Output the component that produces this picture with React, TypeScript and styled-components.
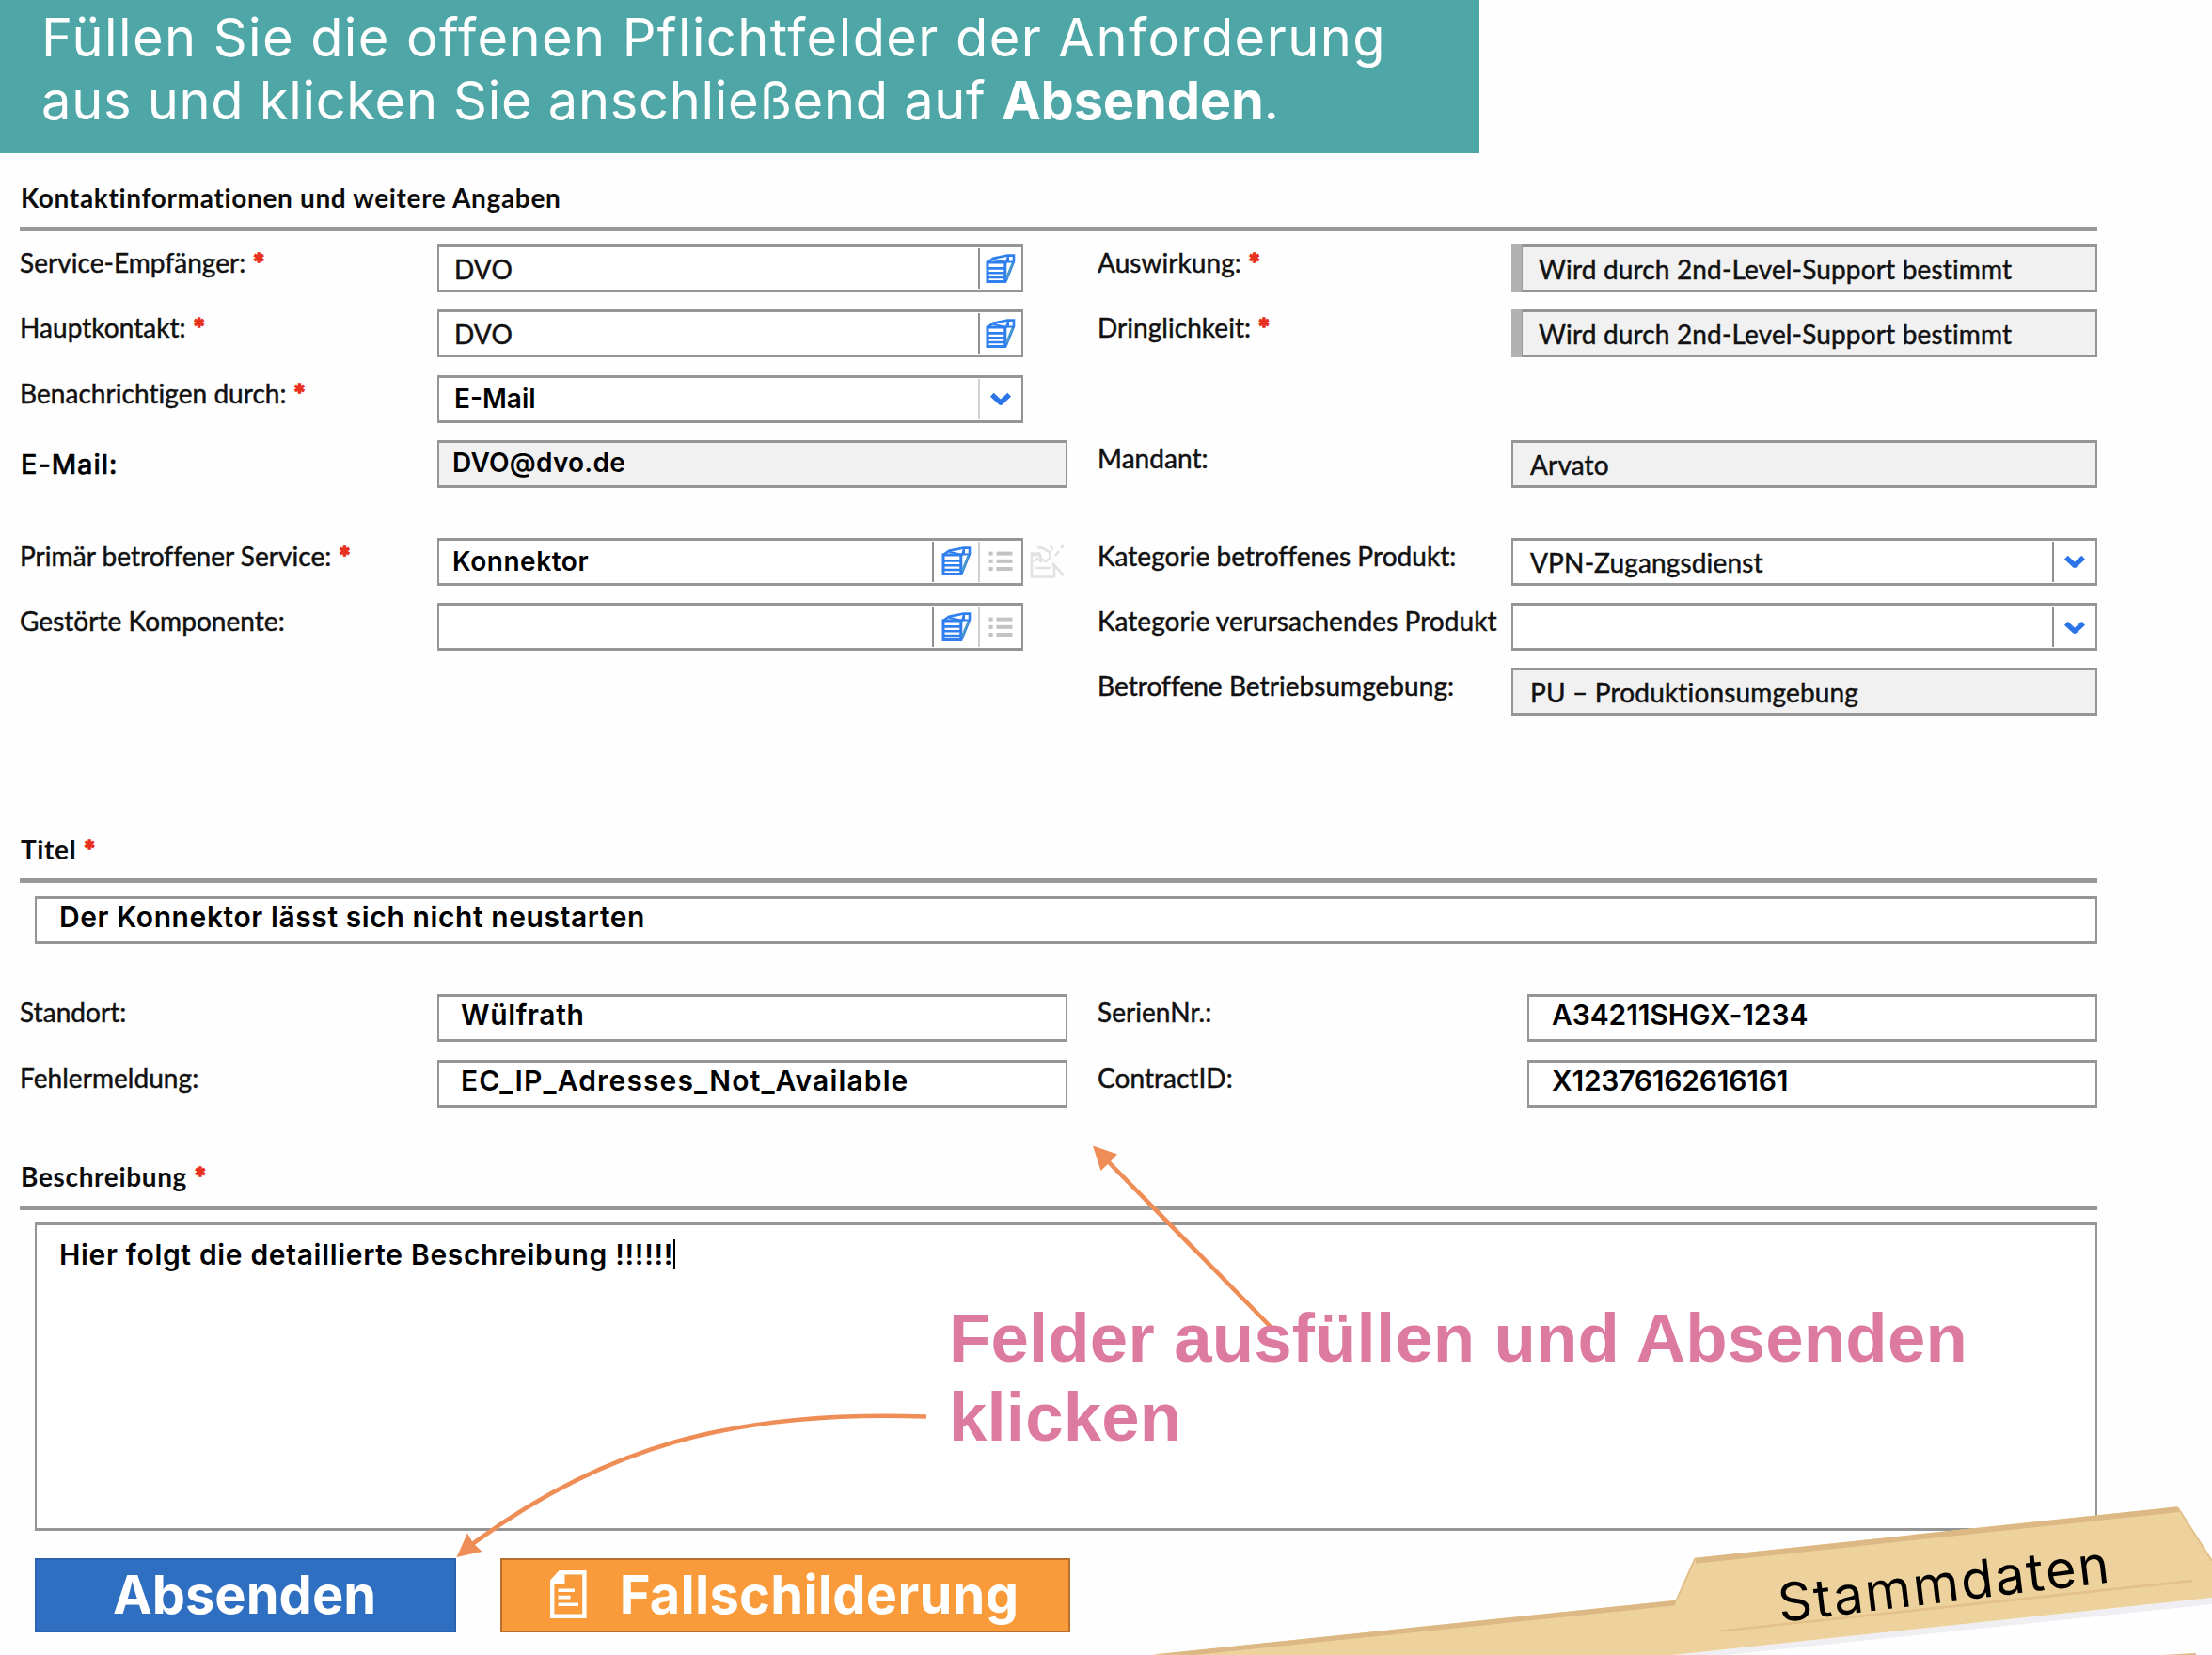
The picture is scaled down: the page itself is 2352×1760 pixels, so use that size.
import React from "react";
import styled, { createGlobalStyle } from "styled-components";

const LABEL_FONT = `Lato, "Open Sans", sans-serif`;
const ENTRY_FONT = `Inter, "Open Sans", sans-serif`;

const GlobalStyle = createGlobalStyle`
  * { box-sizing: border-box; }
  body { margin: 0; background: #fefefe; }
`;

const Page = styled.main`
  position: relative;
  width: 2352px;
  height: 1760px;
  overflow: hidden;
  background: #fefefe;
  color: #111;
  font-family: ${LABEL_FONT};
`;

const Banner = styled.header`
  width: 1573px;
  height: 163px;
  padding: 7px 0 0 44px;
  background: #4ea7a6;
  color: #fff;
  font: 400 56px/67px ${ENTRY_FONT};
  white-space: nowrap;
`;

const BannerLine = styled.div<{ $track: number }>`
  letter-spacing: ${(p) => p.$track}px;
  b { letter-spacing: -0.2px; font-weight: 700; }
`;

const Form = styled.form`
  display: flex;
  flex-direction: column;
  width: 2209px;
  margin-left: 21px;
`;

const SectionHeading = styled.h2<{ $height: number }>`
  display: flex;
  align-items: flex-end;
  height: ${(p) => p.$height}px;
  margin: 0;
  padding: 0 0 14px 1px;
  border-bottom: 5px solid #999;
  font: 700 28px/34px ${LABEL_FONT};
  letter-spacing: 0.66px;
  color: #0c0c0c;
`;

const Required = styled.span`
  margin-left: 8px;
  color: #e8301f;
  font-weight: 900;
  letter-spacing: 0;
  -webkit-text-stroke: 1.6px currentColor;
`;

const FieldRows = styled.div<{ $top: number }>`
  display: flex;
  flex-direction: column;
  gap: 18.3px;
  margin-top: ${(p) => p.$top}px;
`;

const FieldRow = styled.div<{ $spaced?: boolean; $lower?: boolean }>`
  display: grid;
  grid-template-columns: ${(p) =>
    p.$lower ? "444px 670px 32px 457px 606px" : "444px 670px 32px 440px 623px"};
  height: 51px;
  margin-top: ${(p) => (p.$spaced ? 34.6 : 0)}px;
`;

const FieldLabel = styled.label<{ $right?: boolean }>`
  grid-column: ${(p) => (p.$right ? 4 : 1)};
  height: 46px;
  width: 425px;
  overflow: hidden;
  white-space: nowrap;
  font-size: 28px;
  line-height: 38px;
  letter-spacing: 0.05px;
  -webkit-text-stroke: 0.5px currentColor;
`;

const EntryLabel = styled(FieldLabel)`
  padding-left: 1px;
  font: 500 29px/51px ${ENTRY_FONT};
  letter-spacing: 0.9px;
  color: #000;
`;

const Control = styled.div<{ $right?: boolean }>`
  grid-column: ${(p) => (p.$right ? 5 : 2)};
  display: flex;
  align-items: center;
`;

const Box = styled.div<{ $width?: number; $readonly?: boolean; $marked?: boolean }>`
  display: flex;
  width: ${(p) => (p.$width ? `${p.$width}px` : "100%")};
  height: 51px;
  border: 2.5px solid #959595;
  border-width: 3px 2px;
  background: ${(p) => (p.$readonly ? "#f1f1f1" : "#fff")};
  &::before {
    content: "";
    display: ${(p) => (p.$marked ? "block" : "none")};
    width: 11px;
    margin: -3px 0 -3px -2px;
    flex: none;
    background: #b1b1b1;
    border-right: 1px solid #9a9a9a;
  }
`;

const Value = styled.span<{ $pad?: number }>`
  flex: 1;
  padding-left: ${(p) => p.$pad ?? 18}px;
  white-space: nowrap;
  font-size: 28px;
  line-height: 47px;
  letter-spacing: 0.16px;
  -webkit-text-stroke: 0.5px currentColor;
`;

const Entry = styled.span<{ $pad: number; $size?: number; $track?: number; $lift?: number }>`
  flex: 1;
  padding-left: ${(p) => p.$pad}px;
  white-space: nowrap;
  font: 600 ${(p) => p.$size ?? 30}px/${(p) => 45 - 2 * (p.$lift ?? 3)}px ${ENTRY_FONT};
  letter-spacing: ${(p) => p.$track ?? 0}px;
  color: #000;
`;

const Segment = styled.span<{ $tone?: string; $width?: number }>`
  display: flex;
  align-items: center;
  justify-content: center;
  width: ${(p) => p.$width ?? 46}px;
  margin: 1px 0;
  border-left: 2px solid ${(p) => p.$tone ?? "#8f8f8f"};
  svg { display: block; }
`;

const SideIcon = styled.span`
  display: flex;
  margin-left: 7px;
`;

const TitleBox = styled(Box)`
  width: auto;
  margin: 14px 0 0 16px;
`;

const DescriptionBox = styled.div`
  display: flex;
  align-items: flex-start;
  height: 328px;
  margin: 13px 0 0 16px;
  padding: 13px 0 0 24px;
  border: 3px solid #959595;
  border-width: 3px 2px;
  background: #fff;
  font: 600 30px/36px ${ENTRY_FONT};
  letter-spacing: 0.68px;
  color: #000;
`;

const Caret = styled.i`
  width: 2px;
  height: 32px;
  margin-top: 2px;
  background: #000;
`;

const Actions = styled.div`
  display: flex;
  gap: 47px;
  margin: 29px 0 0 16px;
`;

const ActionButton = styled.button<{ $width: number; $fill: string; $edge: string; $track?: number }>`
  display: flex;
  align-items: center;
  justify-content: center;
  width: ${(p) => p.$width}px;
  height: 79px;
  padding: 0 2px 1px 0;
  border: 2px solid ${(p) => p.$edge};
  background: ${(p) => p.$fill};
  color: #fff;
  font: 700 56px/68px ${ENTRY_FONT};
  letter-spacing: ${(p) => p.$track ?? 0}px;
  svg { margin: 0 35px 0 0; }
`;

const Overlay = styled.svg`
  position: absolute;
  inset: 0;
  pointer-events: none;
`;

const Callout = styled.p`
  position: absolute;
  left: 1009px;
  top: 1381px;
  width: 1140px;
  margin: 0;
  color: #dd7a9f;
  font: 700 72.6px/84px "Liberation Sans", Arial, sans-serif;
  letter-spacing: 0.16px;
`;

const FolderText = styled.text`
  font: 400 56px ${ENTRY_FONT};
  letter-spacing: 2.3px;
`;

const CatalogIcon = () => (
  <svg width="32" height="32" viewBox="0 0 32 32" fill="none" stroke="#2f7fee" strokeWidth="3">
    <path d="M2 9v20.4H20.8V9z" />
    <path d="M2 15.4h18.800M2 20.200h18.800M2 25h18.800" strokeWidth="2.600" />
    <path d="M2 9 8 4.800l15.500-3.200h6.500v6.400L21.500 29" strokeWidth="2.600" />
    <path d="M8 5.800 22 9l2-7v6.500h5" strokeWidth="2" />
    <path d="M28.500 10 22 26" stroke="#4d9bc4" strokeWidth="2" />
  </svg>
);

const ListIcon = () => (
  <svg width="26" height="22" viewBox="0 0 26 22" fill="#c3c3c3">
    {[0.6, 8.8, 17].map((y) => (
      <g key={y}>
        <rect x="0.5" y={y} width="4.2" height="4" />
        <rect x="8.5" y={y} width="17" height="4" />
      </g>
    ))}
  </svg>
);

const ChevronIcon = () => (
  <svg width="24" height="16" viewBox="0 0 24 16" fill="none" stroke="#2b75e8" strokeWidth="5.4">
    <path d="m2.800 3.800 9.200 8.400 9.200-8.400" strokeLinejoin="round" />
  </svg>
);

const EditOffIcon = () => (
  <svg width="38" height="38" viewBox="0 0 38 38" fill="none" stroke="#e2e2e2" strokeWidth="2.6">
    <path d="M11 10.500H2v25h24V22" />
    <path d="M6 26h16M2 12h9M4 19l4-3 5 4" />
    <path d="m8 4 6 1 7 4 1 6-5 4-5-3-2-6" />
    <path d="m22 2 2 5M27 13l4-5M33 5l3-3M24 21l12 13" />
  </svg>
);

const DocumentIcon = () => (
  <svg width="39" height="51" viewBox="0 0 39 51">
    <path d="M10.500 2.200H36.400V48.800H2.200V11.500z" fill="none" stroke="#fff" strokeWidth="4.400" />
    <path d="M10.500 0H15.500V15H0V11z" fill="#fff" />
    <path d="M8.500 21.200h17.500M8.500 28.600h13M8.500 36.200h21.500" stroke="#fff" strokeWidth="3.600" />
  </svg>
);

const Label = ({ text, required, right }: { text: string; required?: boolean; right?: boolean }) => (
  <FieldLabel $right={right}>
    {text}
    {required && <Required>*</Required>}
  </FieldLabel>
);

export default function App() {
  return (
    <Page>
      <GlobalStyle />
      <Banner>
        <BannerLine $track={1.4}>Füllen Sie die offenen Pflichtfelder der Anforderung</BannerLine>
        <BannerLine $track={0.7}>
          aus und klicken Sie anschließend auf <b>Absenden</b>.
        </BannerLine>
      </Banner>

      <Form>
        <SectionHeading $height={83}>Kontaktinformationen und weitere Angaben</SectionHeading>
        <FieldRows $top={14}>
          <FieldRow>
            <Label text="Service-Empfänger:" required />
            <Control>
              <Box $width={623}>
                <Value $pad={16}>DVO</Value>
                <Segment><CatalogIcon /></Segment>
              </Box>
            </Control>
            <Label text="Auswirkung:" required right />
            <Control $right>
              <Box $readonly $marked><Value $pad={17}>Wird durch 2nd-Level-Support bestimmt</Value></Box>
            </Control>
          </FieldRow>
          <FieldRow>
            <Label text="Hauptkontakt:" required />
            <Control>
              <Box $width={623}>
                <Value $pad={16}>DVO</Value>
                <Segment><CatalogIcon /></Segment>
              </Box>
            </Control>
            <Label text="Dringlichkeit:" required right />
            <Control $right>
              <Box $readonly $marked><Value $pad={17}>Wird durch 2nd-Level-Support bestimmt</Value></Box>
            </Control>
          </FieldRow>
          <FieldRow>
            <Label text="Benachrichtigen durch:" required />
            <Control>
              <Box $width={623}>
                <Entry $pad={16} $size={28} $lift={0}>E-Mail</Entry>
                <Segment $tone="#d2d2d2" $width={46}><ChevronIcon /></Segment>
              </Box>
            </Control>
          </FieldRow>
          <FieldRow>
            <EntryLabel>E-Mail:</EntryLabel>
            <Control>
              <Box $readonly><Entry $pad={14} $size={28} $lift={1} $track={0.25}>DVO@dvo.de</Entry></Box>
            </Control>
            <Label text="Mandant:" right />
            <Control $right><Box $readonly><Value>Arvato</Value></Box></Control>
          </FieldRow>
          <FieldRow $spaced>
            <Label text="Primär betroffener Service:" required />
            <Control>
              <Box $width={623}>
                <Entry $pad={14} $size={28} $lift={0} $track={0.55}>Konnektor</Entry>
                <Segment $width={49}><CatalogIcon /></Segment>
                <Segment $tone="#cfcfcf"><ListIcon /></Segment>
              </Box>
              <SideIcon><EditOffIcon /></SideIcon>
            </Control>
            <Label text="Kategorie betroffenes Produkt:" right />
            <Control $right>
              <Box>
                <Value>VPN-Zugangsdienst</Value>
                <Segment><ChevronIcon /></Segment>
              </Box>
            </Control>
          </FieldRow>
          <FieldRow>
            <Label text="Gestörte Komponente:" />
            <Control>
              <Box $width={623}>
                <Value />
                <Segment $width={49}><CatalogIcon /></Segment>
                <Segment $tone="#cfcfcf"><ListIcon /></Segment>
              </Box>
            </Control>
            <Label text="Kategorie verursachendes Produkt:" right />
            <Control $right>
              <Box>
                <Value />
                <Segment><ChevronIcon /></Segment>
              </Box>
            </Control>
          </FieldRow>
          <FieldRow>
            <Label text="Betroffene Betriebsumgebung:" right />
            <Control $right><Box $readonly><Value>PU – Produktionsumgebung</Value></Box></Control>
          </FieldRow>
        </FieldRows>

        <SectionHeading $height={178}>Titel<Required>*</Required></SectionHeading>
        <TitleBox><Entry $pad={24} $track={0.6}>Der Konnektor lässt sich nicht neustarten</Entry></TitleBox>

        <FieldRows $top={53}>
          <FieldRow $lower>
            <Label text="Standort:" />
            <Control><Box><Entry $pad={23} $track={0.65}>Wülfrath</Entry></Box></Control>
            <Label text="SerienNr.:" right />
            <Control $right><Box><Entry $pad={24} $track={-0.1}>A34211SHGX-1234</Entry></Box></Control>
          </FieldRow>
          <FieldRow $lower>
            <Label text="Fehlermeldung:" />
            <Control><Box><Entry $pad={23} $track={1.14}>EC_IP_Adresses_Not_Available</Entry></Box></Control>
            <Label text="ContractID:" right />
            <Control $right><Box><Entry $pad={24} $track={-0.2}>X12376162616161</Entry></Box></Control>
          </FieldRow>
        </FieldRows>

        <SectionHeading $height={109}>Beschreibung<Required>*</Required></SectionHeading>
        <DescriptionBox>
          Hier folgt die detaillierte Beschreibung !!!!!!<Caret />
        </DescriptionBox>

        <Actions>
          <ActionButton type="button" $width={448} $fill="#2f6fc1" $edge="#2a62ae">Absenden</ActionButton>
          <ActionButton type="button" $width={606} $fill="#f99b3a" $edge="#b8712c" $track={0.25}>
            <DocumentIcon />
            Fallschilderung
          </ActionButton>
        </Actions>
      </Form>

      <Overlay width="2352" height="1760" viewBox="0 0 2352 1760">
        <g stroke="#ef8d57" strokeWidth="4.600" fill="none">
          <path d="M1352 1412 1177 1234" />
          <path d="M985 1506.500C780 1499 640 1540 501 1643" />
        </g>
        <path d="M1162 1218.500 1188 1227.500 1180 1236 1170.500 1245z" fill="#ef8d57" />
        <path d="M485.500 1656 497 1630.500 503 1641 512.500 1650z" fill="#ef8d57" />

        <path d="M1777 1766 2352 1706V1699L1777 1760z" fill="#efeff3" />
        <path d="M1224 1760 1782.500 1701.700 1802.500 1656.700 2315 1602.300 2352 1660V1699L1777 1760z" fill="#eed29e" />
        <path d="M1226 1759.500 1782.500 1701.700 1781 1707.500 1270 1760z" fill="#dcb884" />
        <path d="M1802.500 1656.700 2315 1602.300 2317 1608 1803 1662.700z" fill="#dcb884" />
        <path d="M2315.500 1603 2352 1660M1782.500 1702 1802.500 1657" stroke="#e2c08a" strokeWidth="2" />
        <path d="M1829.500 1734.500 2331.500 1681" stroke="#e2c18b" strokeWidth="2.600" />
        <path d="M2300 1760 2335 1758V1760z" fill="#dcb884" />
        <FolderText transform="translate(1893 1725) rotate(-6.900)">Stammdaten</FolderText>
      </Overlay>

      <Callout>
        Felder ausfüllen und Absenden
        <br />
        klicken
      </Callout>
    </Page>
  );
}
